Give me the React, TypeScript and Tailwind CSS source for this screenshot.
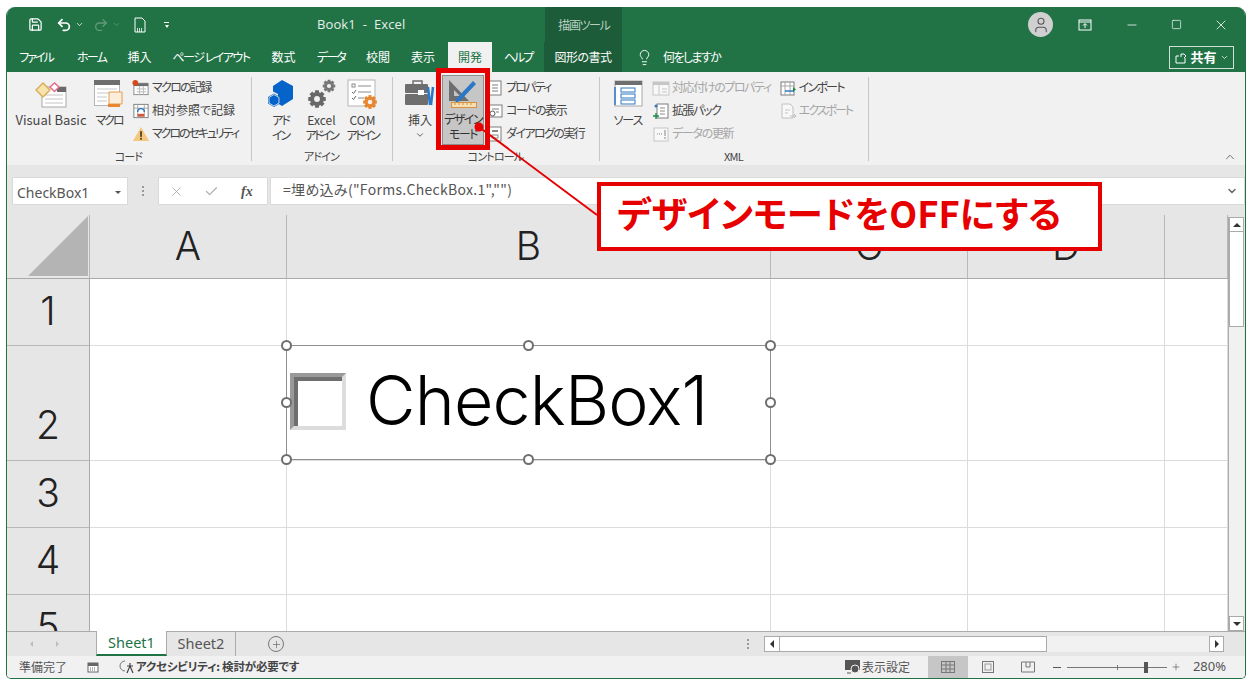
import React from "react";
import { Save, Undo2, Redo2, X, Check, Minus, Square, Lightbulb, ChevronDown, ChevronUp, Plus, User } from "lucide-react";

const Sheet = ({ children, w = 18, h = 18 }: { children: React.ReactNode; w?: number; h?: number }) => (
  <svg width={w} height={h} viewBox={`0 0 ${w} ${h}`} fill="none">{children}</svg>
);

const VBIcon = () => (
  <svg width="32" height="27" viewBox="0 0 32 27" fill="none">
    <rect x="7" y="6" width="24" height="20" fill="#fff" stroke="#a8a8a8" />
    <rect x="22" y="6" width="9" height="5" fill="#6a6a6a" />
    <path d="M10 14h18M10 18h18M10 22h18" stroke="#c4c4c4" />
    <path d="M1 9l7-7 7 7-7 7z" fill="#f7e3ac" stroke="#d9ae5c" strokeWidth="1.5" />
    <path d="M15 6l4.500-4 4.500 4-4.500 4.500z" fill="#fff" stroke="#e26b8f" strokeWidth="1.5" />
  </svg>
);
const MacroIcon = () => (
  <svg width="30" height="28" viewBox="0 0 30 28" fill="none">
    <rect x="0.500" y="0.500" width="25" height="25" fill="#fff" stroke="#b5b5b5" />
    <rect x="0" y="0" width="26" height="5" fill="#6e6e6e" />
    <path d="M3 9h20M3 13h20M3 17h10M3 21h10" stroke="#c6c6c6" />
    <path d="M15 12h13v12h-13z" fill="#fbeedd" stroke="#e69a4c" />
    <rect x="14" y="24" width="12" height="3" fill="#e8872f" />
  </svg>
);
const RecordIcon = () => (
  <Sheet w={19} h={18}>
    <rect x="2" y="4" width="15" height="12" fill="#fff" stroke="#8a8a8a" />
    <rect x="2" y="4" width="15" height="3" fill="#6e6e6e" />
    <path d="M5 10h10M5 13h10M8 7v9M12 7v9" stroke="#b8b8b8" />
    <circle cx="3.500" cy="3.500" r="3" fill="#d9481c" />
  </Sheet>
);
const RelativeIcon = () => (
  <Sheet w={19} h={18}>
    <rect x="2" y="2" width="15" height="14" fill="#fff" stroke="#7c7c7c" />
    <path d="M2 6h15M6 2v14M13 2v14" stroke="#a6a6a6" />
    <path d="M6 10a3.500 3.500 0 0 1 7 0" stroke="#2d78c6" strokeWidth="1.5" />
    <rect x="6" y="12" width="7" height="3" fill="#d0553c" />
  </Sheet>
);
const WarnIcon = () => (
  <Sheet w={19} h={18}>
    <path d="M9.500 1.500 18 16.500H1z" fill="#f4c87f" />
    <rect x="8.500" y="6" width="2" height="6" fill="#5b4a2b" />
    <rect x="8.500" y="13" width="2" height="2" fill="#5b4a2b" />
  </Sheet>
);
const HexIcon = () => (
  <svg width="26" height="28" viewBox="0 0 26 28" fill="none">
    <path d="M14 0 25 6v13l-11 7-4-2.500V14l-5-2.500V6z" fill="#0563c9" />
    <path d="M6 13.500 12 17v6.500L6 27 0 23.500V17z" fill="#0563c9" />
    <path d="M6 14.500 11 17.500v5.500L6 26l-5-3v-5.500z" stroke="#f1f1f1" strokeWidth="0.8" />
  </svg>
);
const Gear = ({ cx, cy, r, color }: { cx: number; cy: number; r: number; color: string }) => {
  const teeth = [0, 45, 90, 135];
  return (
    <g>
      {teeth.map((a) => (
        <rect key={a} x={cx - r * 0.28} y={cy - r * 1.25} width={r * 0.56} height={r * 2.5} fill={color} transform={`rotate(${a} ${cx} ${cy})`} />
      ))}
      <circle cx={cx} cy={cy} r={r} fill={color} />
      <circle cx={cx} cy={cy} r={r * 0.42} fill="#f1f1f1" />
    </g>
  );
};
const GearsIcon = () => (
  <svg width="28" height="30" viewBox="0 0 28 30" fill="none">
    <Gear cx={9} cy={20} r={7} color="#686868" />
    <Gear cx={21} cy={7} r={5} color="#777777" />
  </svg>
);
const ComIcon = () => (
  <svg width="32" height="30" viewBox="0 0 32 30" fill="none">
    <rect x="1" y="1" width="27" height="26" fill="#fff" stroke="#b5b5b5" />
    <rect x="5" y="5" width="3" height="3" stroke="#8a8a8a" />
    <path d="M11 7h13M11 13h13M11 19h6" stroke="#8a8a8a" />
    <path d="M5 13l1.500 1.500L9 11M5 19l1.500 1.500L9 17" stroke="#6a6a6a" />
    <Gear cx={23} cy={23} r={5.500} color="#e8872f" />
  </svg>
);
const CaseIcon = () => (
  <svg width="30" height="28" viewBox="0 0 30 28" fill="none">
    <path d="M8 4V1h9v3" stroke="#6e6e6e" strokeWidth="1.5" />
    <rect x="0" y="4" width="23" height="9" rx="1" fill="#6e6e6e" />
    <rect x="0" y="14" width="23" height="11" rx="1" fill="#6e6e6e" />
    <rect x="13" y="10" width="6" height="5" fill="#fff" />
    <path d="M23 7l2 18M28 7l-2 18" stroke="#2d78c6" strokeWidth="2.500" />
  </svg>
);
const DesignIcon = () => (
  <svg width="32" height="30" viewBox="0 0 32 30" fill="none">
    <path d="M2 1v21h20zM7 11v6h6z" fill="#6e6e6e" fillRule="evenodd" />
    <path d="M10 19 26 2l3 3-16 17-5 2z" fill="#2d78c6" />
    <rect x="4.500" y="23.500" width="25" height="5" fill="#f5dfb4" stroke="#d98f3c" />
    <path d="M8 24v2M12 24v2M16 24v2M20 24v2M24 24v2" stroke="#d98f3c" />
  </svg>
);
const PropIcon = () => (
  <Sheet w={16} h={18}><rect x="2" y="2" width="12" height="14" fill="#fff" stroke="#7c7c7c" /><path d="M5 6h6M5 9h6M5 12h6" stroke="#7c7c7c" /></Sheet>
);
const CodeIcon = () => (
  <Sheet w={16} h={18}><rect x="2" y="3" width="13" height="12" fill="#fff" stroke="#7c7c7c" /><path d="M5 7h7M9 10h3" stroke="#7c7c7c" /><circle cx="5.500" cy="11.500" r="2.500" fill="#fff" stroke="#555" /></Sheet>
);
const DialogIcon = () => (
  <Sheet w={16} h={18}><rect x="2" y="2" width="12" height="14" fill="#fff" stroke="#7c7c7c" /><rect x="5" y="5" width="6" height="2" fill="#8a8a8a" /><rect x="5" y="10" width="6" height="3" stroke="#8a8a8a" /></Sheet>
);
const SourceIcon = () => (
  <svg width="30" height="30" viewBox="0 0 30 30" fill="none">
    <rect x="2" y="2" width="27" height="25" fill="#fff" stroke="#a8a8a8" />
    <rect x="2" y="2" width="27" height="4" fill="#6e6e6e" />
    <rect x="8" y="9" width="14" height="4" stroke="#2d78c6" />
    <rect x="8" y="15" width="14" height="4" stroke="#2d78c6" />
    <rect x="8" y="21" width="14" height="4" stroke="#2d78c6" />
    <path d="M2 8v18" stroke="#2d78c6" strokeWidth="1.5" />
  </svg>
);
const FadedMap = () => (
  <Sheet><rect x="1" y="3" width="16" height="13" fill="#f8f8f8" stroke="#c6c6c6" /><rect x="1" y="3" width="16" height="3" fill="#c6c6c6" /><path d="M7 6v10M10 10h5M10 13h5" stroke="#c6c6c6" /></Sheet>
);
const PackIcon = () => (
  <Sheet><rect x="5" y="2" width="11" height="14" fill="#fff" stroke="#7c7c7c" /><path d="M8 6h5M8 9h5M8 12h5" stroke="#8a8a8a" /><path d="M1 14h6M4 11v6" stroke="#1d8a4c" strokeWidth="1.4" /><circle cx="4" cy="4" r="1.500" fill="#2d78c6" /></Sheet>
);
const FadedRefresh = () => (
  <Sheet><rect x="2" y="3" width="14" height="13" fill="#f8f8f8" stroke="#c6c6c6" /><path d="M5 9h5" stroke="#c0c0c0" strokeDasharray="1 1" strokeWidth="2" /><rect x="12" y="5" width="2" height="6" fill="#c0c0c0" /><rect x="12" y="12" width="2" height="2" fill="#c0c0c0" /></Sheet>
);
const ImportIcon = () => (
  <Sheet><rect x="2" y="3" width="13" height="13" fill="#fff" stroke="#7c7c7c" /><path d="M2 7h13M6 3v13M11 3v13" stroke="#a6a6a6" /><path d="M6 12h9" stroke="#2d78c6" strokeWidth="1.5" /><path d="M14 8l3 2.500-3 2.500" fill="#1d8a4c" /></Sheet>
);
const FadedExport = () => (
  <Sheet><path d="M3 2h8l3 3v11H3z" fill="#f8f8f8" stroke="#c0c0c0" /><path d="M6 8h5M6 11h3" stroke="#c6c6c6" /><path d="M11 14h6M15 12l2 2-2 2" stroke="#bdbdbd" /></Sheet>
);

const Large = ({ w, icon, lines, className = "", textClass = "" }: { w: number; icon: React.ReactNode; lines: React.ReactNode[]; className?: string; textClass?: string }) => (
  <div className={`flex flex-col items-center ${className}`} style={{ width: w }}>
    <div className="mt-[2px] flex h-[32px] w-full items-center justify-center">{icon}</div>
    <div className={`mt-[2px] flex flex-col items-center text-[12px] leading-[15px] whitespace-nowrap ${textClass}`}>
      {lines.map((l, i) => (
        <span key={i}>{l}</span>
      ))}
    </div>
  </div>
);

const Small = ({ icon, label, faded, textClass = "" }: { icon: React.ReactNode; label: string; faded?: boolean; textClass?: string }) => (
  <div className={`flex h-[23px] items-center gap-[2px] text-[12px] whitespace-nowrap ${faded ? "text-[#a6a6a6]" : ""}`}>
    <span className="flex w-[18px] justify-center">{icon}</span>
    <span className={`pb-[2px] ${textClass}`}>{label}</span>
  </div>
);

const Group = ({ w, label, children, className = "" }: { w: number; label: string; children: React.ReactNode; className?: string }) => (
  <div className="relative flex h-full flex-col pt-[4px]" style={{ width: w }}>
    <div className={`flex h-[74px] ${className}`}>{children}</div>
    <div className="flex h-[15px] items-center justify-center pr-[2px] pb-[2px] text-[11px] tracking-[-0.8px]">{label}</div>
    <div className="absolute right-0 top-[5px] h-[84px] w-px bg-[#c6c6c6]" />
  </div>
);

const tabs: [string, number, string][] = [
  ["ファイル", 54, "tracking-[-2px]"],
  ["ホーム", 57, "tracking-[-1.700px]"],
  ["挿入", 39, ""],
  ["ページ レイアウト", 104, "tracking-[-1.500px]"],
  ["数式", 41, ""],
  ["データ", 54, "tracking-[-1.700px]"],
  ["校閲", 40, ""],
  ["表示", 50, ""],
];

const Handle = ({ className }: { className: string }) => (
  <div className={`absolute h-[11px] w-[11px] rounded-full border-2 border-[#6e6e6e] bg-white ${className}`} />
);

const HeaderCell = ({ t }: { t: string }) => (
  <div className="flex items-center justify-center border-r border-b border-r-[#b8b8b8] border-b-[#a9a9a9] bg-[#e6e6e6] text-[39px] font-light text-[#222] font-['Inter',sans-serif]">{t}</div>
);
const RowCell = ({ t, low }: { t: string; low?: boolean }) => (
  <div className={`flex justify-center border-r border-b border-r-[#a9a9a9] border-b-[#b8b8b8] bg-[#e6e6e6] text-[39px] leading-[48px] font-light text-[#222] font-['Inter',sans-serif] ${low ? "items-end pb-[11px]" : "items-center pb-[2px]"}`}>{t}</div>
);
const Cell = () => <div className="border-r border-b border-[#dcdcdc] bg-white" />;

const ViewBtn = ({ active, children }: { active?: boolean; children: React.ReactNode }) => (
  <div className={`flex h-full w-[40px] items-center justify-center ${active ? "bg-[#c6c6c6]" : ""}`}>{children}</div>
);

export default function App() {
  return (
    <div className="relative h-[685px] w-[1253px] overflow-hidden bg-white pt-[7px] pl-[6px] text-[#444] font-['Noto_Sans_CJK_JP',sans-serif] [font-feature-settings:'palt']">
      <div className="flex h-[672px] w-[1240px] flex-col overflow-hidden rounded-t-[9px] rounded-b-[5px] border-x border-b border-[#217346] bg-[#e6e6e6]">
        {/* title */}
        <div className="relative flex h-[35px] shrink-0 items-center bg-[#217346] text-white">
          <div className="flex items-center pl-[21px]">
            <Save size={15} strokeWidth={2} />
            <Undo2 size={16} strokeWidth={2.6} className="ml-[13px]" />
            <ChevronDown size={9} className="ml-[3px]" />
            <Redo2 size={16} strokeWidth={2} className="ml-[9px] text-[#5f9a7b]" />
            <ChevronDown size={9} className="ml-[3px] text-[#5f9a7b]" />
            <svg width="14" height="16" viewBox="0 0 14 16" fill="none" className="ml-[12px]">
              <path d="M2 1h7l3 3v11H2z" stroke="#fff" fill="none" />
              <path d="M4 12h6M4 14h6" stroke="#fff" strokeWidth="1.3" strokeDasharray="1 1" />
            </svg>
            <div className="ml-[17px] flex flex-col items-center gap-[2px]"><div className="h-px w-[5px] bg-white" /><div className="h-0 w-0 border-x-[2.5px] border-t-[3px] border-x-transparent border-t-white" /></div>
          </div>
          <div className="ml-[148px] text-[13px] tracking-[0.1px] text-[#e6efe9] font-['Open_Sans',sans-serif] whitespace-pre">Book1  -  Excel</div>
          <div className="ml-[140px] flex h-full w-[77px] items-center justify-center bg-[#1d5c38] text-[12px] tracking-[-1.400px] text-[#b7cfc1]">描画ツール</div>
          <div className="ml-auto flex h-full items-center pr-[3px]">
            <div className="mr-[25px] flex h-[25px] w-[25px] items-center justify-center rounded-full bg-[#d0d0d0] text-[#555]"><User size={18} strokeWidth={1.4} /></div>
            <svg width="14" height="12" viewBox="0 0 14 12" fill="none" className="mr-[33px]"><rect x="1" y="1" width="12" height="10" stroke="#fff" /><path d="M1 3h12" stroke="#fff" /><path d="M7 9V5M5 6.500 7 4.500 9 6.500" stroke="#fff" /></svg>
            <Minus size={14} strokeWidth={1.3} className="mr-[32px]" />
            <Square size={11} strokeWidth={1.5} className="mr-[31px] rounded-[2px]" />
            <X size={16} strokeWidth={1.2} className="mr-[13px]" />
          </div>
        </div>
        {/* tabs */}
        <div className="flex h-[30px] shrink-0 items-center bg-[#217346] text-[12px] text-white">
          <div className="w-[2px]" />
          {tabs.map(([t, w, c]) => (
            <div key={t} className={`flex h-full items-center justify-center whitespace-nowrap ${c}`} style={{ width: w }}>{t}</div>
          ))}
          <div className="flex h-full w-[44px] items-center justify-center bg-[#f1f1f1] text-[#217346]">開発</div>
          <div className="flex h-full w-[52px] items-center justify-center tracking-[-2px]">ヘルプ</div>
          <div className="flex h-full w-[78px] items-center justify-center bg-[#1d5c38] tracking-[-0.500px]">図形の書式</div>
          <Lightbulb size={17} strokeWidth={1.3} className="ml-[14px]" />
          <span className="ml-[10px] tracking-[-1.600px]">何をしますか</span>
          <div className="ml-auto mr-[11px] flex h-[23px] w-[65px] items-center justify-center gap-[3px] border border-[#cfe0d6] text-[13px] font-bold">
            <svg width="13" height="13" viewBox="0 0 13 13" fill="none"><path d="M2 5v7h9V7M2 5h3M7 6V3h3l2 2-2 2" stroke="#fff" /></svg>
            共有
            <ChevronDown size={9} />
          </div>
        </div>
        {/* ribbon */}
        <div className="relative flex h-[93px] shrink-0 bg-[#f1f1f1]">
          <Group w={245} label="コード" className="pl-[9px]">
            <Large w={70} icon={<VBIcon />} lines={["Visual Basic"]} textClass="text-[13px]" />
            <Large w={30} icon={<MacroIcon />} lines={["マクロ"]} className="ml-[8px]" textClass="tracking-[-2px]" />
            <div className="ml-[8px] flex flex-col">
              <Small icon={<RecordIcon />} label="マクロの記録" textClass="tracking-[-1.700px]" />
              <Small icon={<RelativeIcon />} label="相対参照で記録" />
              <Small icon={<WarnIcon />} label="マクロのセキュリティ" textClass="tracking-[-2.100px]" />
            </div>
          </Group>
          <Group w={141} label="アドイン" className="pl-[8px]">
            <Large w={41} icon={<HexIcon />} lines={["アド", "イン"]} textClass="tracking-[-2px]" />
            <Large w={41} icon={<GearsIcon />} lines={["Excel", <span key="a" className="tracking-[-2.500px]">アドイン</span>]} />
            <Large w={41} icon={<ComIcon />} lines={["COM", <span key="b" className="tracking-[-2.500px]">アドイン</span>]} />
          </Group>
          <Group w={207} label="コントロール" className="pl-[12px]">
            <Large w={30} icon={<CaseIcon />} lines={["挿入", <ChevronDown key="c" size={10} className="mt-[3px]" />]} />
            <div className="relative -mt-px ml-[7px] h-[70px] w-[42px] border border-[#8e8e8e] bg-[#c6c6c6]">
              <div className="flex flex-col items-center text-[#333]">
                <div className="mt-[2px] flex h-[32px] items-center justify-center"><DesignIcon /></div>
                <div className="mt-[1px] flex flex-col items-center text-[12px] leading-[15px] tracking-[-1.500px] whitespace-nowrap"><span>デザイン</span><span>モード</span></div>
              </div>
              <div className="absolute -left-[7px] -right-[7px] -top-[8px] -bottom-[6px] border-[5px] border-[#e60000]" />
            </div>
            <div className="ml-[2px] flex flex-col">
              <Small icon={<PropIcon />} label="プロパティ" textClass="tracking-[-1.800px]" />
              <Small icon={<CodeIcon />} label="コードの表示" textClass="tracking-[-1.300px]" />
              <Small icon={<DialogIcon />} label="ダイアログの実行" textClass="tracking-[-1.600px]" />
            </div>
          </Group>
          <Group w={269} label="XML" className="pl-[13px]">
            <Large w={30} icon={<SourceIcon />} lines={["ソース"]} textClass="tracking-[-1px]" />
            <div className="ml-[9px] flex flex-col">
              <Small icon={<FadedMap />} label="対応付けのプロパティ" faded textClass="tracking-[-1.400px]" />
              <Small icon={<PackIcon />} label="拡張パック" textClass="tracking-[-1.400px]" />
              <Small icon={<FadedRefresh />} label="データの更新" faded textClass="tracking-[-1.300px]" />
            </div>
            <div className="ml-[8px] flex flex-col">
              <Small icon={<ImportIcon />} label="インポート" textClass="tracking-[-1.800px]" />
              <Small icon={<FadedExport />} label="エクスポート" faded textClass="tracking-[-2px]" />
            </div>
          </Group>
          <ChevronUp size={14} strokeWidth={1.4} className="absolute bottom-[1px] right-[8px] text-[#555]" />
        </div>
        {/* formula */}
        <div className="flex h-[50px] shrink-0 items-start bg-[#e6e6e6] pt-[12px] pl-[5px]">
          <div className="flex h-[28px] w-[116px] items-center justify-between border border-[#dadada] bg-white pt-[2px] pl-[4px] pr-[6px] text-[14px] text-[#555] font-['Noto_Sans',sans-serif]">
            CheckBox1
            <div className="h-0 w-0 border-x-[3px] border-t-[3px] border-x-transparent border-t-[#555]" />
          </div>
          <div className="ml-[14px] flex h-[28px] w-[2px] flex-col items-center justify-center gap-[2px]"><div className="h-[2px] w-[2px] bg-[#9a9a9a]" /><div className="h-[2px] w-[2px] bg-[#9a9a9a]" /><div className="h-[2px] w-[2px] bg-[#9a9a9a]" /></div>
          <div className="ml-[14px] flex h-[28px] w-[110px] items-center border border-[#dadada] bg-white pl-[10px] text-[#b0b0b0]">
            <X size={15} strokeWidth={1.5} />
            <Check size={15} strokeWidth={2} className="ml-[20px]" />
            <span className="ml-[22px] text-[14px] font-bold italic text-[#555] font-['Liberation_Serif',serif]">fx</span>
          </div>
          <div className="ml-[2px] flex h-[28px] flex-1 items-center justify-between border border-[#dadada] bg-white pl-[12px] pr-[6px] pb-[4px] text-[14px] tracking-[0.3px] text-[#555]">
            <span>=埋め込み("Forms.CheckBox.1","")</span>
            <ChevronDown size={12} strokeWidth={3} className="mt-[4px] text-[#666]" />
          </div>
        </div>
        {/* grid */}
        <div className="relative flex h-[416px] shrink-0 overflow-hidden bg-[#e6e6e6]">
          <div className="grid w-[1221px] shrink-0 grid-cols-[83px_197px_484px_197px_197px_63px] grid-rows-[64px_67px_115px_67px_67px_67px]">
            <div className="relative border-r border-b border-r-[#b8b8b8] border-b-[#a9a9a9]">
              <svg width="60" height="60" viewBox="0 0 60 60" className="absolute right-[1px] bottom-[2px]"><path d="M60 0v60H0z" fill="#b4b4b4" /></svg>
            </div>
            {["A", "B", "C", "D", ""].map((c, i) => <HeaderCell key={i} t={c} />)}
            {["1", "2", "3", "4", "5"].map((r) => (
              <React.Fragment key={r}>
                <RowCell t={r} low={r === "2"} />
                <Cell /><Cell /><Cell /><Cell /><Cell />
              </React.Fragment>
            ))}
          </div>
          {/* scrollbar */}
          <div className="mt-[2px] flex w-[16px] flex-col border-l border-[#ababab] bg-[#f1f1f1]">
            <div className="flex h-[15px] items-center justify-center border border-[#ababab] bg-white"><div className="h-0 w-0 border-x-[4px] border-b-[4px] border-x-transparent border-b-[#333]" /></div>
            <div className="h-[95px] border-x border-b border-[#ababab] bg-white" />
            <div className="flex-1" />
            <div className="flex h-[15px] items-center justify-center border border-[#ababab] bg-white"><div className="h-0 w-0 border-x-[4px] border-t-[4px] border-x-transparent border-t-[#333]" /></div>
          </div>
          {/* selected checkbox object */}
          <div className="absolute left-[279px] top-[130px] flex h-[115px] w-[485px] items-center border border-[#8e8e8e] bg-white">
            <div className="-mt-[2px] ml-[3px] h-[57px] w-[56px] border-[4px] border-t-[#999] border-r-[#dcdcdc] border-b-[#dcdcdc] border-l-[#999] bg-white">
              <div className="h-full w-full border-t-[4px] border-l-[4px] border-t-[#6e6e6e] border-l-[#6e6e6e] bg-white" />
            </div>
            <span className="-mt-[6px] ml-[20px] text-[68px] leading-none font-light tracking-[-0.800px] text-black font-['Inter',sans-serif] whitespace-nowrap">CheckBox1</span>
            <Handle className="-left-[6px] -top-[6px]" />
            <Handle className="left-[236px] -top-[6px]" />
            <Handle className="-right-[6px] -top-[6px]" />
            <Handle className="-left-[6px] top-[51px]" />
            <Handle className="-right-[6px] top-[51px]" />
            <Handle className="-left-[6px] -bottom-[6px]" />
            <Handle className="left-[236px] -bottom-[6px]" />
            <Handle className="-right-[6px] -bottom-[6px]" />
          </div>
        </div>
        {/* sheet tabs */}
        <div className="flex h-[25px] shrink-0 items-center border-t border-[#ababab] bg-[#e6e6e6] text-[14.5px] text-[#555] font-['Noto_Sans',sans-serif]">
          <div className="ml-[23px] h-0 w-0 border-y-[3px] border-r-[3px] border-y-transparent border-r-[#bdbdbd]" />
          <div className="ml-[23px] h-0 w-0 border-y-[3px] border-l-[3px] border-y-transparent border-l-[#bdbdbd]" />
          <div className="ml-[37px] -mt-px flex h-[25px] w-[71px] items-center justify-center border-x border-b-2 border-x-[#ababab] border-b-[#217346] bg-white text-[#217346]">Sheet1</div>
          <div className="flex h-[24px] w-[69px] items-center justify-center border-r border-[#ababab]">Sheet2</div>
          <div className="ml-[32px] flex h-[16px] w-[16px] items-center justify-center rounded-full border border-[#777]"><Plus size={11} strokeWidth={1.3} /></div>
          <div className="ml-[463px] flex flex-col gap-[2px]"><div className="h-[2px] w-[2px] bg-[#9a9a9a]" /><div className="h-[2px] w-[2px] bg-[#9a9a9a]" /><div className="h-[2px] w-[2px] bg-[#9a9a9a]" /></div>
          <div className="ml-[15px] flex h-[16px] w-[460px] bg-[#f1f1f1]">
            <div className="flex h-full w-[16px] items-center justify-center border border-[#ababab] bg-white"><div className="h-0 w-0 border-y-[4px] border-r-[4px] border-y-transparent border-r-[#333]" /></div>
            <div className="h-full w-[267px] border-y border-r border-[#ababab] bg-white" />
            <div className="flex-1" />
            <div className="flex h-full w-[15px] items-center justify-center border border-[#ababab] bg-white"><div className="h-0 w-0 border-y-[4px] border-l-[4px] border-y-transparent border-l-[#333]" /></div>
          </div>
        </div>
        {/* status */}
        <div className="flex h-[22px] flex-1 items-center bg-[#f1f1f1] text-[12px] text-[#555]">
          <span className="ml-[12px]">準備完了</span>
          <svg width="12" height="12" viewBox="0 0 12 12" fill="none" className="ml-[20px]"><rect x="1" y="2" width="10" height="9" fill="#fff" stroke="#666" /><rect x="1" y="2" width="10" height="3" fill="#666" /><path d="M3 7h6M3 9h6" stroke="#666" strokeDasharray="1 1" /></svg>
          <svg width="16" height="16" viewBox="0 0 16 16" fill="none" className="ml-[19px]"><path d="M7 2a5 5 0 1 0 0 10" stroke="#777" /><path d="M9 7h6M12 4v3l-3 7M12 7l3 7" stroke="#444" strokeWidth="1.2" /></svg>
          <span className="ml-[2px] text-[11.5px] font-bold tracking-[-0.200px] text-[#444]">アクセシビリティ: 検討が必要です</span>
          <svg width="16" height="14" viewBox="0 0 16 14" fill="none" className="ml-[546px]"><rect x="0" y="0" width="15" height="10" fill="#555" /><circle cx="10" cy="9" r="4" fill="#555" stroke="#f1f1f1" /><path d="M2 13h4" stroke="#555" /></svg>
          <span className="ml-[1px] text-[12px]">表示設定</span>
          <div className="ml-[18px] flex h-full items-center">
            <ViewBtn active><svg width="14" height="12" viewBox="0 0 14 12" fill="none"><rect x="0.500" y="0.500" width="13" height="11" stroke="#777" /><path d="M5 0v12M9 0v12M0 4h14M0 8h14" stroke="#777" /></svg></ViewBtn>
            <ViewBtn><svg width="12" height="12" viewBox="0 0 12 12" fill="none"><rect x="0.500" y="0.500" width="11" height="11" stroke="#777" /><rect x="3" y="3" width="6" height="6" stroke="#999" /></svg></ViewBtn>
            <ViewBtn><svg width="14" height="12" viewBox="0 0 14 12" fill="none"><path d="M.5 1v10h13V1zM5 1v5h4V1" stroke="#777" /></svg></ViewBtn>
          </div>
          <span className="ml-[5px] h-px w-[8px] bg-[#555]" />
          <div className="relative ml-[6px] h-px w-[100px] bg-[#777]">
            <div className="absolute left-[50px] -top-[2px] h-[5px] w-px bg-[#777]" />
            <div className="absolute left-[77px] -top-[5px] h-[11px] w-[4px] bg-[#555]" />
          </div>
          <Plus size={10} strokeWidth={1.5} className="ml-[4px]" />
          <span className="ml-[12px] text-[13px] font-['Noto_Sans',sans-serif]">280%</span>
        </div>
      </div>
      {/* callout */}
      <div className="absolute left-[597px] top-[182px] flex h-[69px] w-[505px] items-center border-[4px] border-[#e60000] bg-white pb-[8px] pl-[16px] text-[36.3px] font-bold text-[#e60000] whitespace-nowrap">デザインモードをOFFにする</div>
      <svg width="1253" height="685" className="pointer-events-none absolute left-0 top-0">
        <path d="M479 127 597 215" stroke="#e60000" strokeWidth="2" />
        <circle cx="479" cy="127" r="4.500" fill="#e60000" />
      </svg>
    </div>
  );
}
